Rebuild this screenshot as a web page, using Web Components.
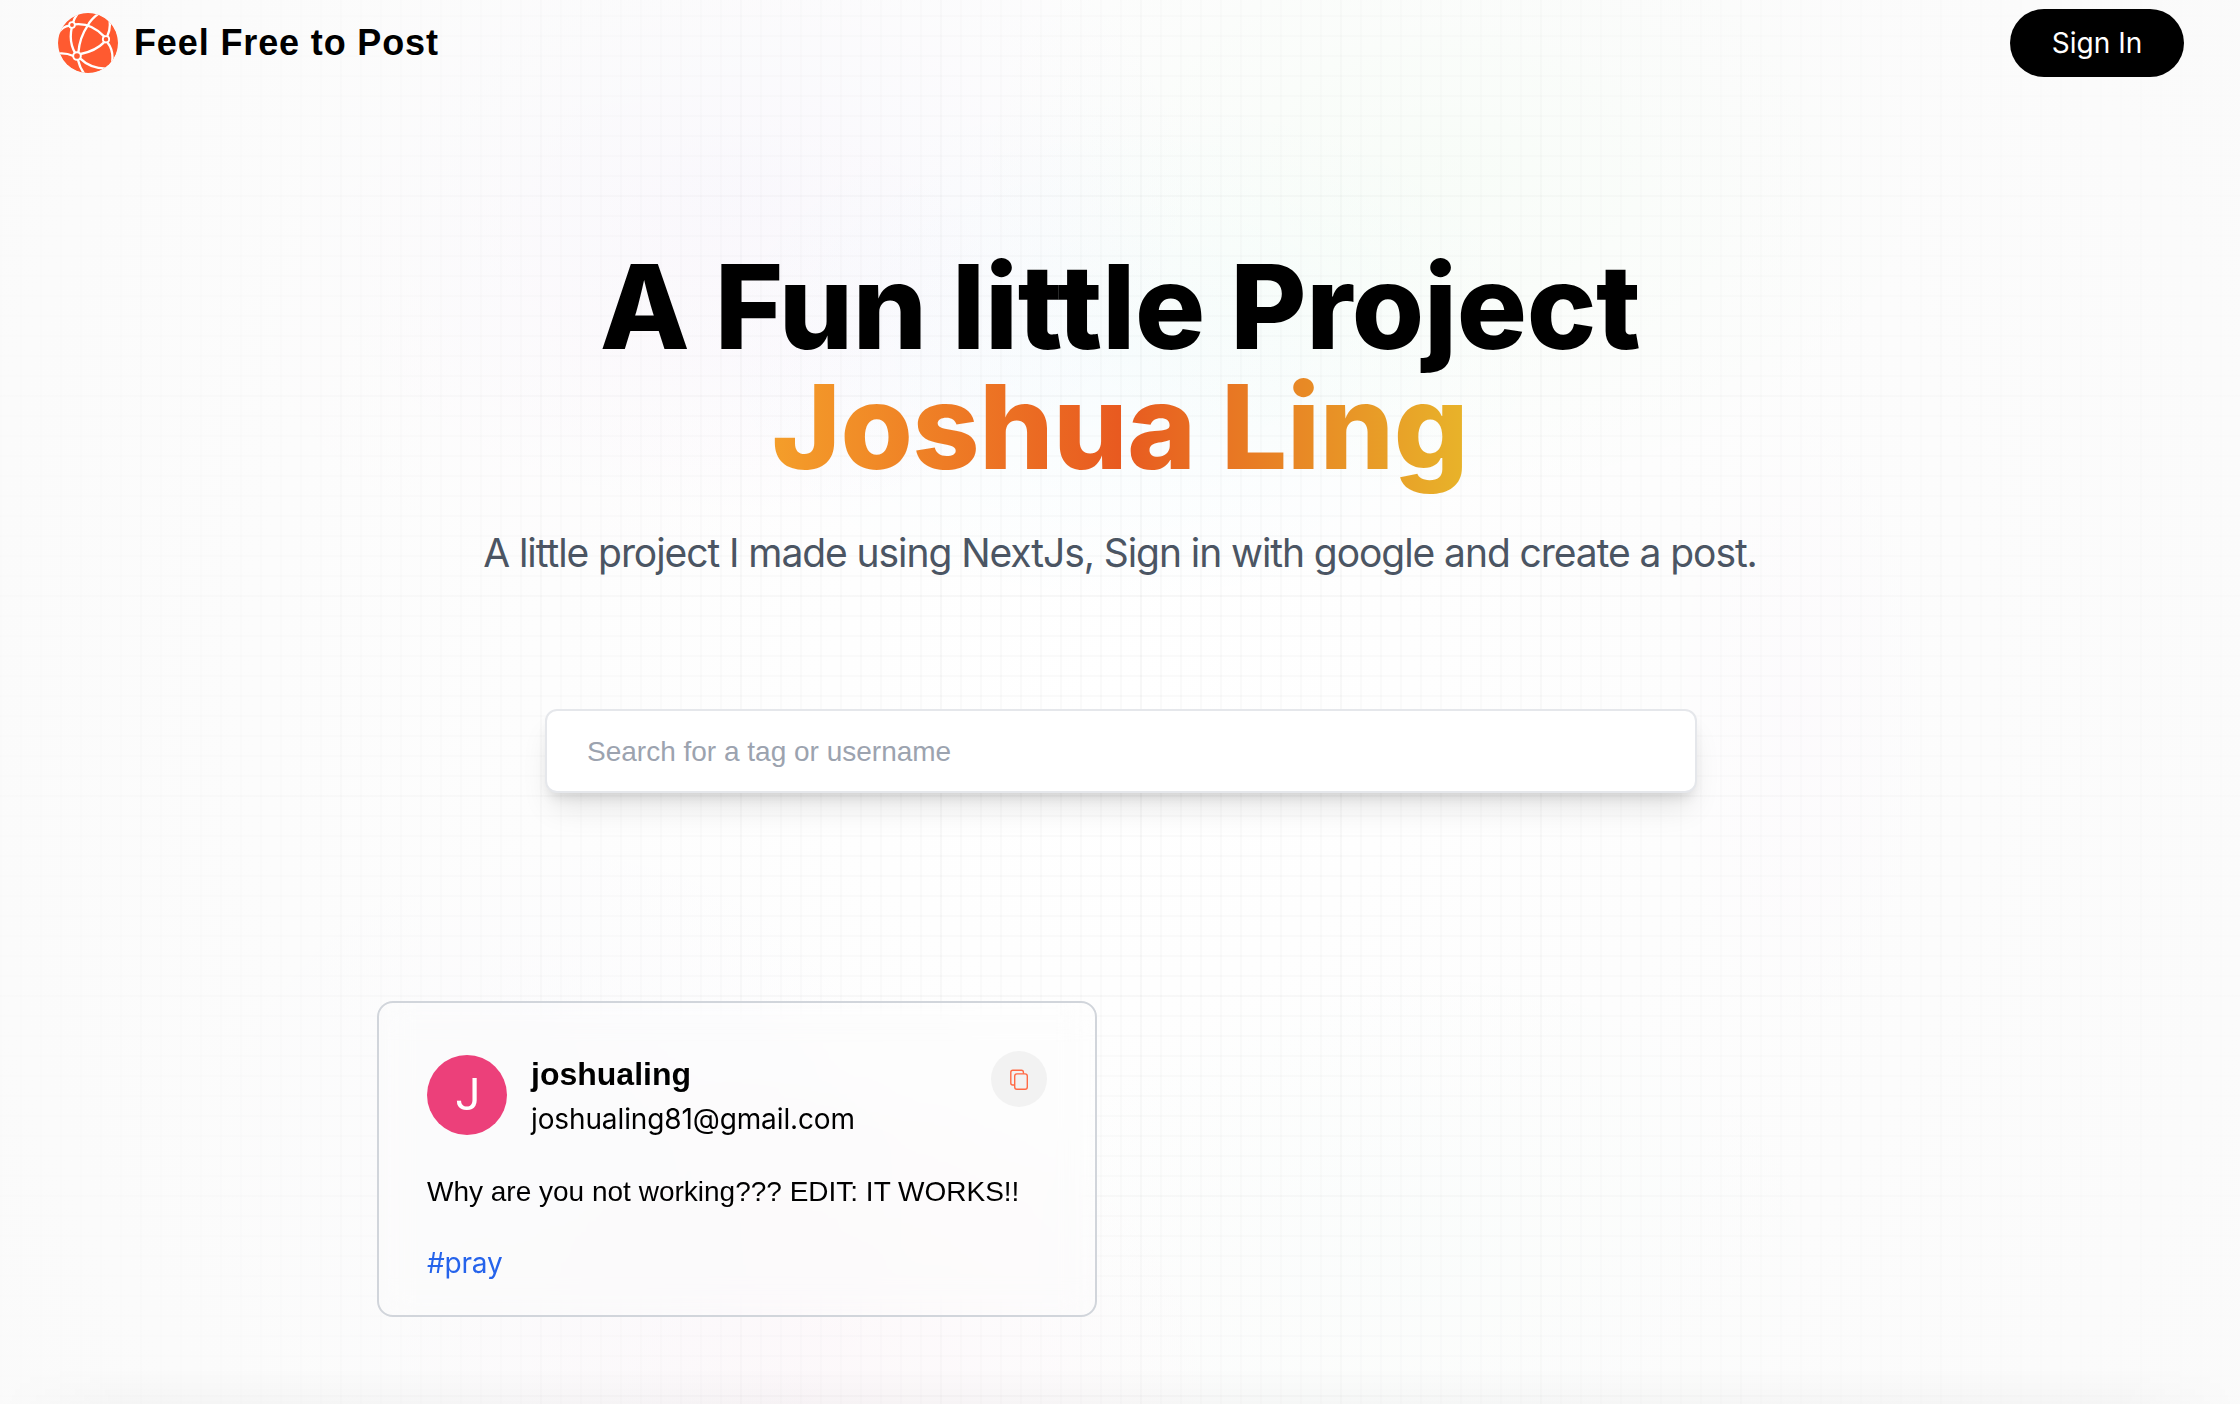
<!DOCTYPE html>
<html lang="en">
<head>
<meta charset="utf-8">
<title>Feel Free to Post</title>
<style>
  html, body { margin: 0; height: 100%; overflow: hidden; }
  body { font-family: Inter, "Liberation Sans", sans-serif; background: #fff; color: #000; }
</style>
</head>
<body>
<post-app></post-app>
<script>
const define = (name, html) => {
  const template = document.createElement('template');
  template.innerHTML = html;
  customElements.define(name, class extends HTMLElement {
    constructor() {
      super();
      this.attachShadow({ mode: 'open' }).append(template.content.cloneNode(true));
    }
  });
};

define('page-backdrop', `
  <style>
    :host { position: absolute; inset: 0; overflow: hidden; pointer-events: none; }
    div { position: absolute; inset: 0; }
    .tint { background:
      radial-gradient(460px 330px at 740px 190px, rgba(120,80,245,.042), transparent),
      radial-gradient(480px 330px at 1450px 170px, rgba(60,240,60,.045), transparent),
      radial-gradient(420px 260px at 1130px 350px, rgba(0,200,255,.03), transparent),
      radial-gradient(420px 260px at 640px 330px, rgba(255,80,200,.016), transparent),
      radial-gradient(130px 330px at 1800px 720px, rgba(220,80,255,.02), transparent),
      radial-gradient(420px 300px at 1420px 1250px, rgba(60,220,140,.02), transparent),
      radial-gradient(420px 330px at 800px 1400px, rgba(255,50,150,.045), transparent),
      radial-gradient(380px 360px at 560px 1180px, rgba(120,80,255,.018), transparent); }
    .grid { background:
      repeating-linear-gradient(90deg, rgba(0,0,0,.012) 0 2px, transparent 2px 200px) 140px 0,
      repeating-linear-gradient(rgba(0,0,0,.012) 0 2px, transparent 2px 200px) 0 195px,
      repeating-linear-gradient(90deg, rgba(0,0,0,.021) 0 2px, transparent 2px 20px),
      repeating-linear-gradient(rgba(0,0,0,.021) 0 2px, transparent 2px 20px) 0 15px;
      background-size: 200px 200px, 200px 200px, 200px 200px, 200px 200px; }
    .fade { background: radial-gradient(circle at 50% 50%, rgba(250,250,250,0) 0, rgba(250,250,250,.92) 100%); }
    .base { inset: auto 0 0 0; height: 36px;
      background: linear-gradient(transparent, rgba(0,0,0,.024));
      mask-image: linear-gradient(90deg, transparent, #000 120px calc(100% - 120px), transparent); }
  </style>
  <div class="tint"></div><div class="grid"></div><div class="fade"></div><div class="base"></div>`);

define('brand-logo', `
  <style>
    :host { display: block; width: 60px; height: 60px; }
    svg { display: block; }
  </style>
  <svg width="60" height="60" viewBox="54 39 180 180">
    <defs><clipPath id="c"><circle cx="144" cy="129" r="90"/></clipPath></defs>
    <g clip-path="url(#c)" fill="none" stroke="#fff" stroke-width="7">
      <circle cx="144" cy="129" r="91" fill="#ff5a30" stroke="none"/>
      <path d="M99 68Q102 56 112 42M88 77Q68 80 56 98M105 73Q154 68 193 110M95 84Q86 126 106 160"/>
      <path d="M177 40Q152 58 143 77Q119 112 115 158M202 108Q213 86 208 58M122 162Q168 152 192 127M203 128Q222 152 216 190"/>
      <path d="M100 168Q78 158 54 161M114 180Q119 202 133 222M121 176Q150 205 198 206"/>
      <circle cx="96" cy="75" r="8.500" fill="#ff5a30" stroke-width="5.500"/>
      <circle cx="198" cy="118" r="9.500" fill="#ff5a30" stroke-width="5.500"/>
      <circle cx="111" cy="168" r="11.500" fill="#ff5a30" stroke-width="6"/>
    </g>
  </svg>`);

define('sign-in-button', `
  <style>
    :host { display: block; }
    button { all: unset; box-sizing: border-box; display: flex; align-items: center; justify-content: center;
      width: 174px; height: 68px; border-radius: 34px; background: #000; color: #fff; font: 400 28px/40px Inter, sans-serif; }
  </style>
  <button><slot></slot></button>`);

define('site-nav', `
  <style>
    :host { display: flex; justify-content: space-between; align-items: center; height: 86px; padding: 0 56px 0 58px; }
    a { display: flex; align-items: center; gap: 16px; }
    span { font: 700 36px/56px "Liberation Sans", sans-serif; letter-spacing: .87px; }
  </style>
  <a><brand-logo></brand-logo><span><slot></slot></span></a>
  <sign-in-button>Sign In</sign-in-button>`);

define('hero-heading', `
  <style>
    :host { display: flex; flex-direction: column; align-items: center; text-align: center; }
    h1 { margin: 0; font: 800 117px/120px Inter, sans-serif; letter-spacing: -.33px; }
    .accent { background: linear-gradient(90deg, #f49e2a, #e85a20 50%, #e8b42a);
      -webkit-background-clip: text; background-clip: text; color: transparent; }
    p { margin: 38px 0 0; font: 400 39px/56px Inter, sans-serif; letter-spacing: -1.07px; color: #4b5563; }
  </style>
  <h1><span><slot name="title"></slot></span><br><span class="accent"><slot name="name"></slot></span></h1>
  <p><slot></slot></p>`);

define('search-field', `
  <style>
    :host { display: block; width: 1152px; }
    div { box-sizing: border-box; height: 84px; padding: 21px 40px 19px; border: 2px solid #e5e7eb; border-radius: 12px; background: #fff;
      box-shadow: 0 20px 30px -6px rgba(0,0,0,.1), 0 8px 12px -4px rgba(0,0,0,.1);
      font: 400 28px/40px "Liberation Sans", sans-serif; color: #9ca3af; }
  </style>
  <div><slot></slot></div>`);

define('copy-button', `
  <style>
    :host { display: flex; width: 56px; height: 56px; border-radius: 50%; background: #f2f2f2; }
  </style>
  <svg width="56" height="56" viewBox="0 0 56 56" fill="none" stroke="#ff6a45" stroke-width="1.400">
    <rect x="23.700" y="22.900" width="12.600" height="15.400" rx="2.200"/>
    <path d="M32.400 22.700V21.200a2 2 0 0 0-2-2H21.800a2 2 0 0 0-2 2V32a2 2 0 0 0 2 2h1.700"/>
  </svg>`);

define('post-card', `
  <style>
    :host { display: block; box-sizing: border-box; width: 720px; height: 316px; padding: 48px 48px 32px; border: 2px solid #d1d5db;
      border-radius: 16px; background: rgba(255,255,255,.2); backdrop-filter: blur(16px); }
    header { display: flex; justify-content: space-between; align-items: flex-start; }
    .user { display: flex; align-items: center; gap: 24px; }
    .avatar { display: flex; align-items: center; justify-content: center; box-sizing: border-box; width: 80px; height: 80px; padding-left: 2px; border-radius: 50%;
      background: #ec407a; color: #fff; font: 400 44px/80px Roboto, sans-serif; }
    .name { font: 700 32px/46px "Liberation Sans", sans-serif; padding-bottom: 2px; }
    .mail { font: 400 28px/40px Inter, sans-serif; letter-spacing: -.12px; }
    p { margin: 33px 0 31px; font: 400 28px/40px "Liberation Sans", sans-serif; }
    .tag { font: 400 28px/40px Inter, sans-serif; color: #2563eb; letter-spacing: -.2px; }
  </style>
  <header>
    <div class="user">
      <div class="avatar"><slot name="initial"></slot></div>
      <div><div class="name"><slot name="name"></slot></div><div class="mail"><slot name="mail"></slot></div></div>
    </div>
    <copy-button></copy-button>
  </header>
  <p><slot></slot></p>
  <div class="tag"><slot name="tag"></slot></div>`);

define('post-app', `
  <style>
    :host { display: block; position: relative; height: 1404px; overflow: hidden; }
    .page { position: relative; display: flex; flex-direction: column; height: 100%; }
    hero-heading { margin-top: 161px; }
    search-field { margin: 128px 0 0 545px; }
    post-card { margin: 208px 0 0 377px; }
  </style>
  <page-backdrop></page-backdrop>
  <div class="page">
    <site-nav>Feel Free to Post</site-nav>
    <hero-heading>
      <span slot="title">A Fun little Project</span><span slot="name">Joshua Ling</span>A little project I made using NextJs, Sign in with google and create a post.
    </hero-heading>
    <search-field>Search for a tag or username</search-field>
    <post-card>
      <span slot="initial">J</span><span slot="name">joshualing</span><span slot="mail">joshualing81@gmail.com</span>Why are you not working??? EDIT: IT WORKS!!<span slot="tag">#pray</span>
    </post-card>
  </div>`);
</script>
</body>
</html>
